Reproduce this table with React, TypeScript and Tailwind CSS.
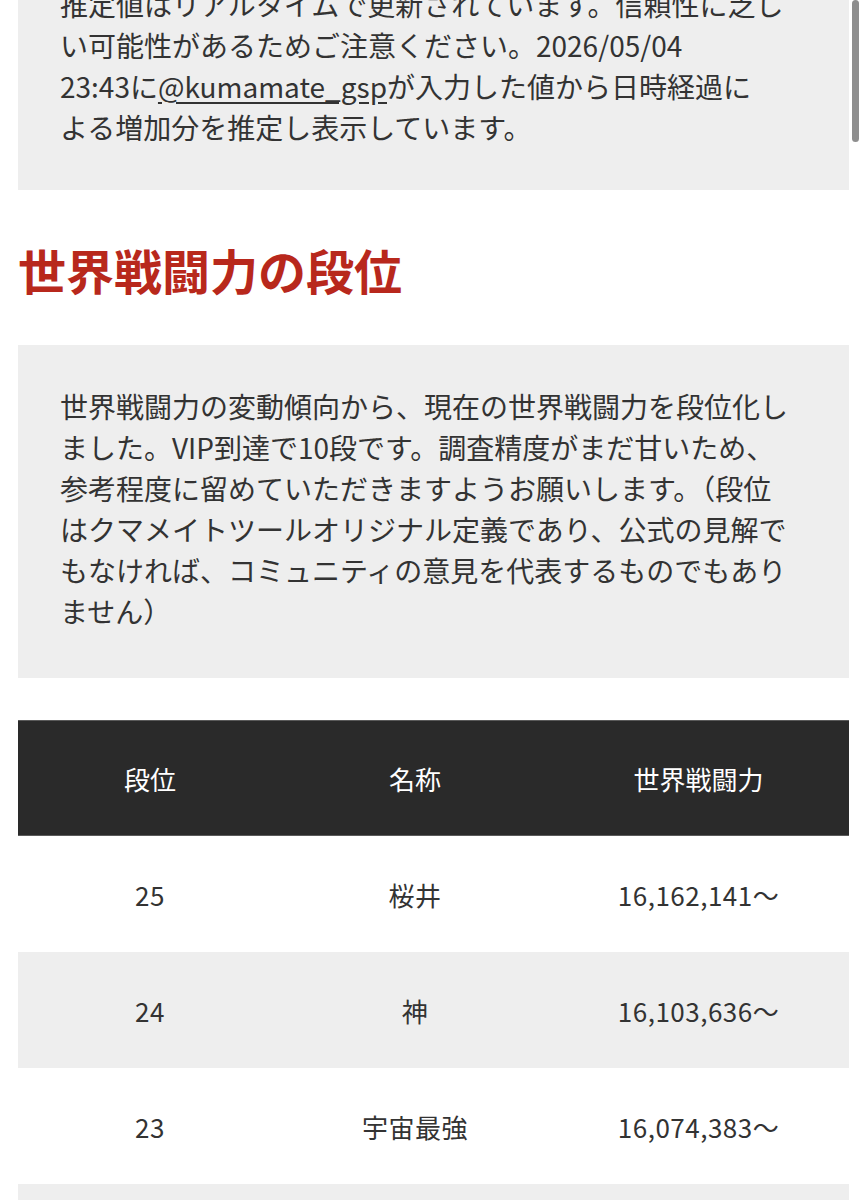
import React from "react";

// 段位テーブルのデータ
const ranks = [
  { rank: "25", name: "桜井", power: "16,162,141～" },
  { rank: "24", name: "神", power: "16,103,636～" },
  { rank: "23", name: "宇宙最強", power: "16,074,383～" },
];

const font = { fontFamily: '"Noto Sans CJK JP", "Noto Sans", sans-serif' };

export default function App() {
  return (
    <div className="relative min-h-screen bg-white text-[#333] overflow-hidden" style={font}>
      {/* scrollbar overlay */}
      <div className="fixed right-[7px] top-0 h-[142px] w-[7px] rounded-full bg-[#8e8e8e]" />

      <div className="pl-[18px] pr-[17px] pb-[40px]">
        {/* 推定値の注意書き */}
        <div className="-mt-[58px] bg-[#eeeeee] px-[42px] pt-[42px] pb-[42px] text-[28px] leading-[41px]">
          推定値はリアルタイムで更新されています。信頼性に乏し
          <br />
          い可能性があるためご注意ください。2026/05/04
          <br />
          23:43に<span className="underline underline-offset-4">@kumamate_gsp</span>が入力した値から日時経過に
          <br />
          よる増加分を推定し表示しています。
        </div>

        <h2 className="mt-[43px] mb-[40px] text-[48px] leading-[72px] font-bold text-[#b8281c]">
          世界戦闘力の段位
        </h2>

        <div className="bg-[#eeeeee] px-[42px] pt-[41px] pb-[46px] text-[28px] leading-[41px]">
          世界戦闘力の変動傾向から、現在の世界戦闘力を段位化し
          <br />
          ました。VIP到達で10段です。調査精度がまだ甘いため、
          <br />
          参考程度に留めていただきますようお願いします。（段位
          <br />
          はクマメイトツールオリジナル定義であり、公式の見解で
          <br />
          もなければ、コミュニティの意見を代表するものでもあり
          <br />
          ません）
        </div>

        <div className="mt-[42px] text-[26px]">
          <div className="grid grid-cols-[264px_266px_1fr] h-[116px] items-center bg-[#2a2a2a] border-y border-[#5a5a5a] text-center text-white">
            <div>段位</div>
            <div>名称</div>
            <div>世界戦闘力</div>
          </div>
          {ranks.map((r, i) => (
            <div
              key={r.rank}
              className={
                "grid grid-cols-[264px_266px_1fr] h-[116px] items-center text-center tracking-[0.5px] " +
                (i % 2 === 1 ? "bg-[#eeeeee]" : "bg-white")
              }
            >
              <div>{r.rank}</div>
              <div>{r.name}</div>
              <div>{r.power}</div>
            </div>
          ))}
          <div className="h-[116px] bg-[#eeeeee]" />
        </div>
      </div>
    </div>
  );
}
